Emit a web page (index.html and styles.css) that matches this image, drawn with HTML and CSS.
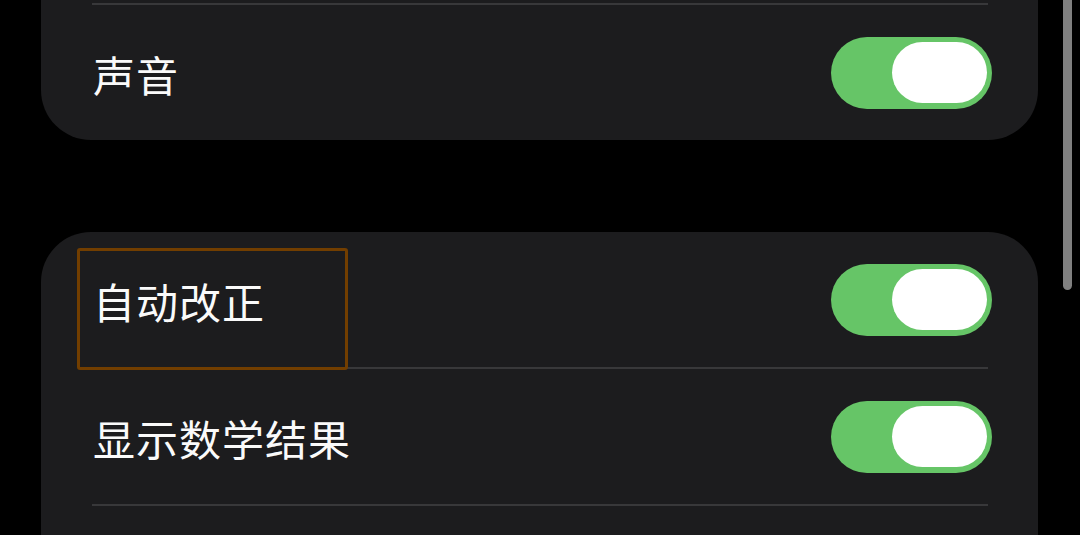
FILE: index.html
```html
<!DOCTYPE html>
<html lang="zh-CN">

<head>
    <meta charset="UTF-8">
    <meta name="viewport" content="width=device-width, initial-scale=1.0">
    <title>设置</title>
    <link rel="stylesheet" href="styles.css">
</head>

<body>
    <div class="page">
        <div class="card card-cut">
            <div class="row row-stub"></div>
            <div class="sep"></div>
            <div class="row">
                <span class="label">声音</span>
                <span class="toggle on"><span class="knob"></span></span>
            </div>
        </div>

        <div class="card">
            <div class="row">
                <span class="label">自动改正</span>
                <span class="toggle on"><span class="knob"></span></span>
                <span class="focus"></span>
            </div>
            <div class="sep"></div>
            <div class="row">
                <span class="label">显示数学结果</span>
                <span class="toggle on"><span class="knob"></span></span>
            </div>
            <div class="sep"></div>
            <div class="row"></div>
        </div>
    </div>
    <div class="scrollbar"></div>
</body>

</html>
```

FILE: styles.css
```css
html,
body {
    margin: 0;
    height: 100%;
    overflow: hidden;
    background: #000;
}

body {
    font-family: "Noto Sans CJK SC", "Noto Sans", sans-serif;
    color: #fafafa;
}

.page {
    width: 997px;
    margin-left: 41px;
    display: flex;
    flex-direction: column;
    gap: 92px;
}

.card {
    background: #1c1c1e;
    border-radius: 50px;
}

.card-cut {
    border-top-left-radius: 0;
    border-top-right-radius: 0;
}

.row {
    position: relative;
    height: 135px;
    margin: 0 50px 0 51px;
    display: flex;
    align-items: center;
    justify-content: space-between;
}

.row-stub {
    height: 3px;
}

.sep {
    height: 2px;
    margin: 0 50px 0 51px;
    background: #38383a;
}

.label {
    font-size: 42px;
    letter-spacing: 1px;
    line-height: 1;
    margin-top: 3px;
    margin-left: 1px;
}

.toggle {
    width: 161px;
    height: 72px;
    margin-right: -4px;
    border-radius: 36px;
    background: #3a3a3c;
    display: flex;
    align-items: center;
    box-sizing: border-box;
    padding: 0 5px;
}

.toggle.on {
    background: #66c567;
    justify-content: flex-end;
}

.knob {
    width: 95px;
    height: 61px;
    border-radius: 31px;
    background: #fff;
    margin-top: -1px;
}

.focus {
    position: absolute;
    left: -15px;
    top: 16px;
    width: 271px;
    height: 122px;
    box-sizing: border-box;
    border: 3px solid #723e00;
    border-radius: 3px;
}

.scrollbar {
    position: absolute;
    left: 1063px;
    top: -10px;
    width: 9px;
    height: 300px;
    border-radius: 5px;
    background: #808080;
}
```
